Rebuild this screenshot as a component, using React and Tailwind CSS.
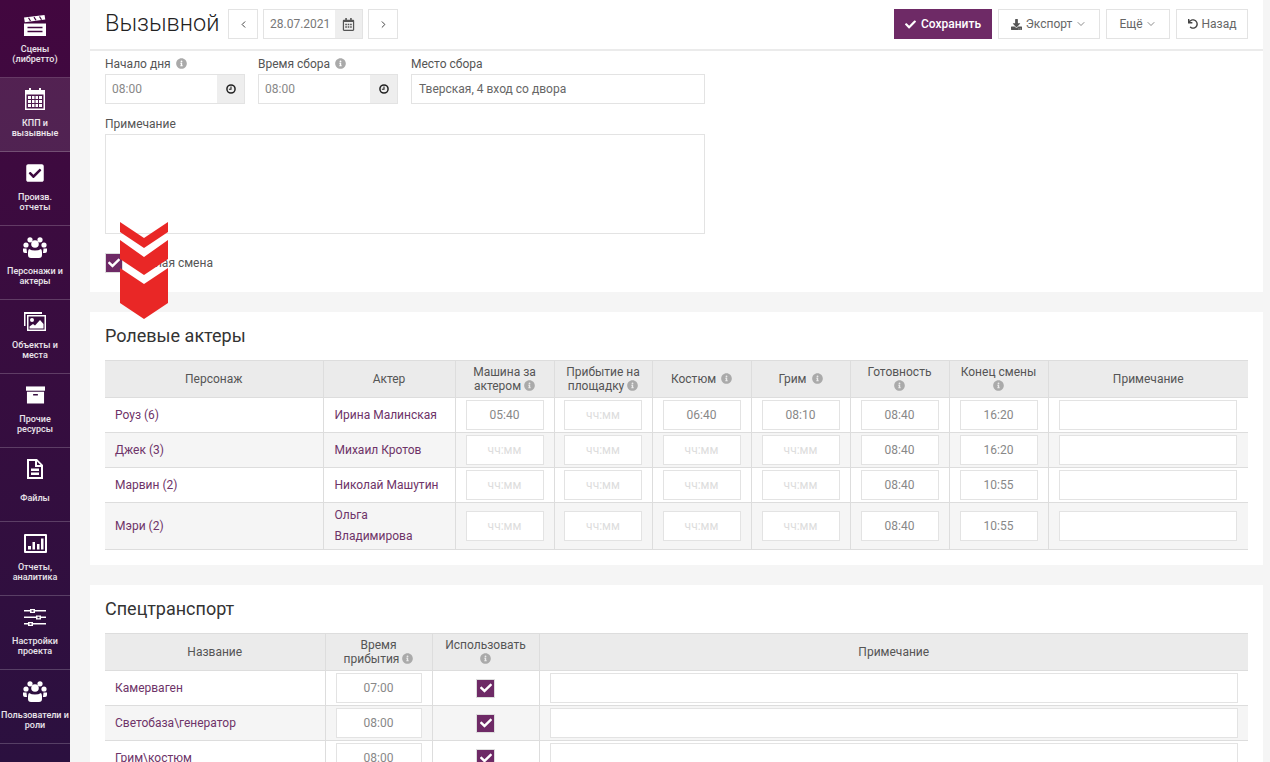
import { FaCheck, FaDownload, FaUndo, FaInfoCircle, FaCheckSquare, FaRegCalendarAlt } from "react-icons/fa";
import { ChevronLeft, ChevronRight, ChevronDown } from "lucide-react";

function ClapperIcon() {
  return (<svg viewBox="0 0 22 21" className="h-[21px] w-[22px]" fill="#fff">
      <path d="M0 2.500 20.500 0l.8 4.600L.8 7.200z" />
      <path d="M0 8.500h22V21H0z" />
      <path d="M3.500 12.500h15M3.500 16.500h15" stroke="#42073f" strokeWidth="1.300" />
      <path d="M4.500 2.800 6.500 6M10 2.100l2 3.200M15.500 1.500l2 3.200" stroke="#42073f" strokeWidth="1.200" />
    </svg>);
}

function CalendarIcon() {
  return (<svg viewBox="0 0 20 22" className="h-[22px] w-[20px]" fill="#fff">
      <path d="M0 2h20v20H0z" />
      <path d="M4 0h2v4H4zM14 0h2v4h-2z" />
      <path d="M1.500 6.500h17v14h-17z" fill="#4e1a4e" />
      <path d="M3 8h3v3H3zM7 8h2.500v3H7zM10.500 8H13v3h-2.500zM14 8h3v3h-3zM3 12h3v3H3zM7 12h2.500v3H7zM10.500 12H13v3h-2.500zM14 12h3v3h-3zM3 16h3v3H3zM7 16h2.500v3H7zM10.500 16H13v3h-2.500zM14 16h3v3h-3z" />
    </svg>);
}

function UsersIcon() {
  return (<svg viewBox="0 0 24 21" className="h-[21px] w-[24px]" fill="#fff">
      <circle cx="3" cy="8" r="2.600" />
      <circle cx="7" cy="2.800" r="2.600" />
      <circle cx="17" cy="2.800" r="2.600" />
      <circle cx="21" cy="8" r="2.600" />
      <circle cx="12" cy="7" r="3.800" />
      <path d="M0 11.500h3.500l.5 4.500H2q-2 0-2-2zM24 11.500h-3.500l-.5 4.500h2q2 0 2-2z" />
      <path d="M6 12q2.500 1.500 6 1.500t6-1.500q1 1 1 3.500v2.500q0 3-3 3H8q-3 0-3-3v-2.500q0-2.500 1-3.500z" />
    </svg>);
}

function PictureIcon() {
  return (<svg viewBox="0 0 22 19" className="h-[19px] w-[22px]" fill="#fff">
      <path fillRule="evenodd" d="M0 0h18v2H1.500v12H0z" />
      <path fillRule="evenodd" d="M3 3h19v16H3zM4.500 4.500v13h16v-13z" />
      <circle cx="8" cy="8" r="2" />
      <path d="M5.500 16.500v-2l3.500-2.500 2 1.500 5-5.500 3.500 4v4.500z" />
    </svg>);
}

function BoxIcon() {
  return (<svg viewBox="0 0 20 18" className="h-[18px] w-[19px]" fill="#fff">
      <path d="M0 0h20v4.500H0z" />
      <path fillRule="evenodd" d="M1 5.500h18V18H1zM7.500 8v1.500h5V8z" />
    </svg>);
}

function FileIcon() {
  return (<svg viewBox="0 0 16 20" className="h-[20px] w-[16px]" fill="#fff">
      <path fillRule="evenodd" d="M0 0h10l6 6v14H0zM2 2v16h12V8H8V2zM10 2.500V6h3.500z" />
      <path d="M4 9.500h8v2.500H4zM4 13.500h8V16H4z" />
    </svg>);
}

function ChartIcon() {
  return (<svg viewBox="0 0 23 19" className="h-[19px] w-[23px]" fill="#fff">
      <path fillRule="evenodd" d="M1 0h21q1 0 1 1v17q0 1-1 1H1q-1 0-1-1V1q0-1 1-1zM2 2v15h19V2z" />
      <path d="M4 12h3v3.500H4zM8.500 8H11v7.500H8.500zM13 10h2.500v5.500H13zM17 4.500h2.500v11H17z" />
    </svg>);
}

function SlidersIcon() {
  return (<svg viewBox="0 0 22 17" className="h-[17px] w-[22px]" fill="#fff">
      <path fillRule="evenodd" d="M0 1h6V0h5v1h11v1.500H11V4H6V2.500H0zM7.500 1.200v1.600h2V1.200z" />
      <path fillRule="evenodd" d="M0 7.500h12V6.500h5v1h5V9h-5v1.500h-5V9H0zM13.500 7.700v1.600h2V7.700z" />
      <path fillRule="evenodd" d="M0 14h4v-1h5v1h13v1.500H9V17H4v-1.500H0zM5.500 14.200v1.600h2v-1.600z" />
    </svg>);
}

function ClockIcon() {
  return (<svg viewBox="0 0 12 12" className="h-[10px] w-[10px]" fill="none" stroke="#222" strokeWidth="1.800">
      <circle cx="6" cy="6" r="4.900" />
      <path d="M6 3v3.200H3.500" strokeWidth="1.300" />
    </svg>);
}

const menu = [
  { icon: <ClapperIcon />, lines: ["Сцены", "(либретто)"], first: true },
  { icon: <CalendarIcon />, lines: ["КПП и", "вызывные"], active: true },
  { icon: <FaCheckSquare className="text-[20px]" />, lines: ["Произв.", "отчеты"] },
  { icon: <UsersIcon />, lines: ["Персонажи и", "актеры"] },
  { icon: <PictureIcon />, lines: ["Объекты и", "места"] },
  { icon: <BoxIcon />, lines: ["Прочие", "ресурсы"] },
  { icon: <FileIcon />, lines: ["Файлы"], tall: true },
  { icon: <ChartIcon />, lines: ["Отчеты,", "аналитика"] },
  { icon: <SlidersIcon />, lines: ["Настройки", "проекта"] },
  { icon: <UsersIcon />, lines: ["Пользователи и", "роли"] },
];

function Sidebar() {
  return (<aside className="h-full w-[70px] shrink-0 overflow-hidden bg-gradient-to-b from-[#42073f] to-[#2b103f] text-white">
      {menu.map((item) => (<div key={item.lines[0]} className={`flex flex-col items-center border-b border-white/20 ${item.first ? "h-[78px] pt-[13px]" : "h-[74px] pt-[9px]"} ${item.active ? "bg-white/10" : ""}`}>
          <div className="flex h-[24px] items-center justify-center">{item.icon}</div>
          <div className={`${item.tall ? "mt-[12px]" : "mt-[7px]"} whitespace-nowrap text-center text-[9px] font-medium leading-[10px] text-white/90`}>
            {item.lines.map((line) => <div key={line}>{line}</div>)}
          </div>
        </div>))}
    </aside>);
}

function Info({ className = "" }) {
  return <FaInfoCircle className={`inline-block align-[-1px] text-[11px] text-[#aaa] ${className}`}/>;
}

function HeaderButton({ children, className = "" }) {
  return (<button className={`flex h-[30px] items-center justify-center gap-[4px] border border-[#e3e3e3] bg-white text-[12px] text-[#666] ${className}`}>
      {children}
    </button>);
}

function Header() {
  return (<header className="flex h-[51px] shrink-0 items-center border-b-2 border-[#ebebeb] bg-white pb-[1px] pl-[15px] pr-[15px]">
      <h1 className="w-[123px] text-[23.5px] font-light text-[#222]">Вызывной</h1>
      <HeaderButton className="w-[30px]"><ChevronLeft size={11} strokeWidth={2} className="text-[#333]"/></HeaderButton>
      <div className="ml-[5px] flex h-[30px] w-[100px] border border-[#e3e3e3] text-[12px] text-[#777]">
        <span className="flex-1 pl-[6px] leading-[28px]">28.07.2021</span>
        <span className="flex w-[27px] items-center justify-center bg-[#eee]"><FaRegCalendarAlt className="text-[13px] text-[#555]"/></span>
      </div>
      <HeaderButton className="ml-[5px] w-[30px]"><ChevronRight size={11} strokeWidth={2} className="text-[#333]"/></HeaderButton>
      <div className="ml-auto flex gap-[6px]">
        <button className="flex h-[30px] w-[98px] items-center justify-center gap-[5px] bg-[#6e2a66] text-[12px] font-medium text-white">
          <FaCheck className="text-[11px]"/> Сохранить
        </button>
        <HeaderButton className="w-[102px]"><FaDownload className="text-[11px] text-[#555]"/> Экспорт <ChevronDown size={12} strokeWidth={1.5} className="-ml-[1px]"/></HeaderButton>
        <HeaderButton className="w-[64px]">Ещё <ChevronDown size={12} strokeWidth={1.5} className="-ml-[2px]"/></HeaderButton>
        <HeaderButton className="w-[72px]"><FaUndo className="text-[10px] text-[#444]"/> Назад</HeaderButton>
      </div>
    </header>);
}

function TimeField({ label }) {
  return (<div className="w-[140px]">
      <div className="mb-[2px] h-[16px] text-[12px] leading-[16px] text-[#555]">{label} <Info className="ml-[2px]"/></div>
      <div className="flex h-[30px] border border-[#e3e3e3] text-[12px] text-[#888]">
        <span className="flex-1 pl-[6px] leading-[28px]">08:00</span>
        <span className="flex w-[27px] items-center justify-center bg-[#eee]"><ClockIcon /></span>
      </div>
    </div>);
}

function Checkbox({ className = "h-[19px] w-[19px]" }) {
  return (<span className={`flex items-center justify-center border border-[#ddd] bg-[#6e2a66] ${className}`}>
      <FaCheck className="text-[12px] text-white"/>
    </span>);
}

function Chevrons() {
  return (<svg viewBox="0 0 48 97" className="absolute left-[30px] top-[222px] h-[97px] w-[48px]" fill="#e92726">
      <polygon points="0,0 24,16 48,0 48,10 24,26 0,10"/>
      <polygon points="0,18 24,35 48,18 48,37 24,53 0,37"/>
      <polygon points="0,46 24,62 48,46 48,81 24,97 0,81"/>
    </svg>);
}

function CallForm() {
  return (<section className="flex flex-col items-start bg-white pb-[19px] pl-[15px] pr-[15px] pt-[5px]">
      <div className="flex gap-[13px]">
        <TimeField label="Начало дня"/>
        <TimeField label="Время сбора"/>
        <div className="w-[294px]">
          <div className="mb-[2px] h-[16px] text-[12px] leading-[16px] text-[#555]">Место сбора</div>
          <div className="h-[30px] border border-[#e3e3e3] pl-[7px] text-[12px] leading-[28px] text-[#666]">Тверская, 4 вход со двора</div>
        </div>
      </div>
      <div className="mb-[2px] mt-[12px] h-[16px] text-[12px] leading-[16px] text-[#555]">Примечание</div>
      <div className="h-[100px] w-[600px] border border-[#e3e3e3]"/>
      <div className="mt-[19px] flex items-center gap-[10px]">
        <Checkbox className="h-[20px] w-[18px]"/>
        <span className="text-[12px] text-[#555]">Ночная смена</span>
      </div>
    </section>);
}

function TimeInput({ value, className = "w-[78px]" }) {
  return (<input readOnly value={value || ""} placeholder="чч:мм" className={`mx-auto block h-[30px] border border-[#e3e3e3] bg-white text-center text-[12px] text-[#888] outline-none placeholder:text-[#ddd] ${className}`}/>);
}

function NoteInput({ className }) {
  return <input readOnly className={`mx-auto block h-[30px] border border-[#e3e3e3] bg-white outline-none ${className}`}/>;
}

const th = "border border-[#ddd] bg-[#ebebeb] px-[2px] text-center align-middle text-[12px] font-normal leading-[14px] text-[#555] first:border-l-0 last:border-r-0";
const td = "border border-[#ddd] p-0 align-middle text-[12px] text-[#6e3368] first:border-l-0 last:border-r-0";

const actors = [
  { role: "Роуз (6)", actor: "Ирина Малинская", times: ["05:40", "", "06:40", "08:10", "08:40", "16:20"] },
  { role: "Джек (3)", actor: "Михаил Кротов", times: ["", "", "", "", "08:40", "16:20"] },
  { role: "Марвин (2)", actor: "Николай Машутин", times: ["", "", "", "", "08:40", "10:55"] },
  { role: "Мэри (2)", actor: "Ольга Владимирова", times: ["", "", "", "", "08:40", "10:55"], tall: true },
];

function ActorsTable() {
  return (<section className="mt-[20px] bg-white pb-[15px] pl-[15px] pr-[15px] pt-[14px]">
      <h2 className="mb-[14px] text-[18px] font-normal leading-[20px] text-[#333]">Ролевые актеры</h2>
      <table className="w-[1143px] table-fixed border-collapse">
        <colgroup>
          <col className="w-[218px]"/><col className="w-[132px]"/><col className="w-[99px]"/><col className="w-[98px]"/><col className="w-[99px]"/><col className="w-[99px]"/><col className="w-[99px]"/><col className="w-[99px]"/><col className="w-[200px]"/>
        </colgroup>
        <thead>
          <tr className="h-[37px]">
            <th className={th}>Персонаж</th>
            <th className={th}>Актер</th>
            <th className={th}>Машина за<br/>актером <Info /></th>
            <th className={th}>Прибытие на<br/>площадку <Info /></th>
            <th className={th}>Костюм <Info className="ml-[2px]"/></th>
            <th className={th}>Грим <Info className="ml-[2px]"/></th>
            <th className={th}>Готовность<br/><Info /></th>
            <th className={th}>Конец смены<br/><Info /></th>
            <th className={th}>Примечание</th>
          </tr>
        </thead>
        <tbody>
          {actors.map((row, index) => (<tr key={row.role} className={`${row.tall ? "h-[47px]" : "h-[35px]"} ${index % 2 ? "bg-[#f5f5f5]" : "bg-white"}`}>
              <td className={`${td} pl-[10px]`}>{row.role}</td>
              <td className={`${td} pl-[11px] pr-[8px] leading-[21px]`}>{row.actor}</td>
              {row.times.map((time, i) => <td key={i} className={td}><TimeInput value={time}/></td>)}
              <td className={td}><NoteInput className="w-[178px]"/></td>
            </tr>))}
        </tbody>
      </table>
    </section>);
}

const vehicles = [
  { name: "Камерваген", time: "07:00" },
  { name: "Светобаза\\генератор", time: "08:00" },
  { name: "Грим\\костюм", time: "08:00" },
];

function TransportTable() {
  return (<section className="mt-[20px] bg-white pl-[15px] pr-[15px] pt-[14px]">
      <h2 className="mb-[14px] text-[18px] font-normal leading-[20px] text-[#333]">Спецтранспорт</h2>
      <table className="w-[1143px] table-fixed border-collapse">
        <colgroup>
          <col className="w-[220px]"/><col className="w-[107px]"/><col className="w-[107px]"/><col className="w-[709px]"/>
        </colgroup>
        <thead>
          <tr className="h-[37px]">
            <th className={th}>Название</th>
            <th className={th}>Время<br/>прибытия <Info /></th>
            <th className={th}>Использовать<br/><Info /></th>
            <th className={th}>Примечание</th>
          </tr>
        </thead>
        <tbody>
          {vehicles.map((row, index) => (<tr key={row.name} className={`h-[35px] ${index % 2 ? "bg-[#f5f5f5]" : "bg-white"}`}>
              <td className={`${td} pl-[10px]`}>{row.name}</td>
              <td className={td}><TimeInput value={row.time} className="w-[86px]"/></td>
              <td className={td}><Checkbox className="mx-auto h-[19px] w-[19px]"/></td>
              <td className={td}><NoteInput className="w-[688px]"/></td>
            </tr>))}
        </tbody>
      </table>
    </section>);
}

export default function App() {
  return (<div className="flex h-[762px] overflow-hidden bg-[#f5f5f5] font-['Roboto',sans-serif]">
      <Sidebar />
      <main className="relative ml-[20px] mr-[7px] flex-1 overflow-hidden">
        <Header />
        <CallForm />
        <ActorsTable />
        <TransportTable />
        <Chevrons />
      </main>
    </div>);
}
